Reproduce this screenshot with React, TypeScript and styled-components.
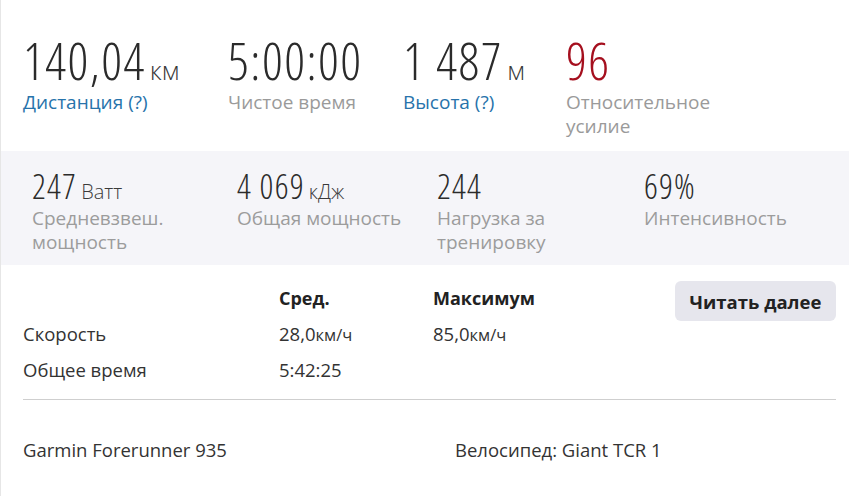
import * as React from 'react';
import styled, { createGlobalStyle } from 'styled-components';

const GlobalStyle = createGlobalStyle`
  html, body {
    margin: 0;
    padding: 0;
    background: #ffffff;
  }
  body {
    font-family: "Open Sans", "Noto Sans", sans-serif;
    color: #333333;
  }
`;

interface TopStat {
  value: string;
  unit?: string;
  label: string;
  tone: 'link' | 'muted';
  accent?: boolean;
  width: string;
}

const topStats: TopStat[] = [
  { value: '140,04', unit: 'км', label: 'Дистанция (?)', tone: 'link', width: '205px' },
  { value: '5:00:00', label: 'Чистое время', tone: 'muted', width: '175px' },
  { value: '1 487', unit: 'м', label: 'Высота (?)', tone: 'link', width: '163px' },
  { value: '96', label: 'Относительное усилие', tone: 'muted', accent: true, width: '160px' },
];

const bandStats = [
  { value: '247', unit: 'Ватт', label: 'Средневзвеш. мощность' },
  { value: '4 069', unit: 'кДж', label: 'Общая мощность' },
  { value: '244', label: 'Нагрузка за тренировку' },
  { value: '69%', label: 'Интенсивность' },
];

const App: React.FC = () => (
  <Page>
    <GlobalStyle />
    <TopRow>
      {topStats.map((s) => (
        <TopItem key={s.label} $width={s.width}>
          <BigValue $accent={s.accent}>
            {s.value}
            {s.unit && <BigUnit>{s.unit}</BigUnit>}
          </BigValue>
          <TopLabel $tone={s.tone}>{s.label}</TopLabel>
        </TopItem>
      ))}
    </TopRow>

    <Band>
      {bandStats.map((s) => (
        <BandItem key={s.label}>
          <BandValue>
            {s.value}
            {s.unit && <BandUnit>{s.unit}</BandUnit>}
          </BandValue>
          <BandLabel>{s.label}</BandLabel>
        </BandItem>
      ))}
    </Band>

    <Details>
      <Table>
        <Cell />
        <HeadCell>Сред.</HeadCell>
        <HeadCell>Максимум</HeadCell>
        <Cell>Скорость</Cell>
        <Cell>
          28,0<SmallUnit>км/ч</SmallUnit>
        </Cell>
        <Cell>
          85,0<SmallUnit>км/ч</SmallUnit>
        </Cell>
        <Cell>Общее время</Cell>
        <Cell>5:42:25</Cell>
        <Cell />
      </Table>
      <MoreButton type="button">Читать далее</MoreButton>
    </Details>

    <Divider />

    <Footer>
      <FooterText>Garmin Forerunner 935</FooterText>
      <FooterText>Велосипед: Giant TCR 1</FooterText>
    </Footer>
  </Page>
);

const Page = styled.div`
  min-height: 100vh;
  box-sizing: border-box;
  border-left: 1px solid #e6e6e6;
  padding-top: 32px;
`;

const TopRow = styled.div`
  display: flex;
  align-items: flex-start;
  padding: 0 0 13px 22px;
`;

const TopItem = styled.div<{ $width: string }>`
  width: ${(p) => p.$width};
  flex-shrink: 0;
`;

const BigValue = styled.div<{ $accent?: boolean }>`
  font-size: 51px;
  font-weight: 300;
  font-stretch: condensed;
  letter-spacing: 1.5px;
  line-height: 56px;
  color: ${(p) => (p.$accent ? '#a50f1e' : '#2b2b2b')};
  white-space: nowrap;
  margin-bottom: 2px;
`;

const BigUnit = styled.span`
  font-size: 26px;
  font-stretch: normal;
  letter-spacing: 0;
  line-height: 1;
  margin-left: 4px;
  color: #3a3a3a;
`;

const TopLabel = styled.div<{ $tone: 'link' | 'muted' }>`
  font-size: 19px;
  line-height: 24px;
  color: ${(p) => (p.$tone === 'link' ? '#2773ab' : '#9a9a9a')};
`;

const Band = styled.div`
  display: grid;
  grid-template-columns: 205px 200px 207px 1fr;
  background: #f5f5f9;
  padding: 15px 0 11px 31px;
`;

const BandItem = styled.div`
  padding-right: 14px;
`;

const BandValue = styled.div`
  font-size: 34px;
  font-weight: 300;
  font-stretch: condensed;
  letter-spacing: 1.2px;
  line-height: 40px;
  color: #2b2b2b;
  white-space: nowrap;
`;

const BandUnit = styled.span`
  font-size: 20px;
  font-stretch: normal;
  letter-spacing: 0;
  line-height: 1;
  margin-left: 4px;
  color: #3a3a3a;
`;

const BandLabel = styled.div`
  font-size: 19px;
  line-height: 24px;
  color: #9c9c9c;
`;

const Details = styled.div`
  display: flex;
  align-items: flex-start;
  justify-content: space-between;
  padding: 15px 13px 11px 22px;
`;

const Table = styled.div`
  display: grid;
  grid-template-columns: 256px 154px 140px;
  grid-auto-rows: 36px;
  align-items: center;
`;

const Cell = styled.div`
  font-size: 18.5px;
  line-height: 24px;
  color: #333333;
  white-space: nowrap;
`;

const HeadCell = styled(Cell)`
  font-weight: 700;
  font-size: 18px;
  color: #222222;
`;

const SmallUnit = styled.span`
  font-size: 16.5px;
`;

const MoreButton = styled.button`
  margin-top: 1px;
  width: 161px;
  height: 40px;
  padding: 0;
  border: none;
  border-radius: 6px;
  background: #e6e6ed;
  font-family: inherit;
  font-size: 18.5px;
  font-weight: 700;
  color: #222222;
  cursor: pointer;
`;

const Divider = styled.hr`
  margin: 0 13px 0 22px;
  border: none;
  border-top: 1px solid #cfcfcf;
`;

const Footer = styled.div`
  display: grid;
  grid-template-columns: 432px 1fr;
  padding: 38px 0 0 22px;
`;

const FooterText = styled.div`
  font-size: 18.5px;
  line-height: 24px;
  color: #333333;
`;

export default App;
